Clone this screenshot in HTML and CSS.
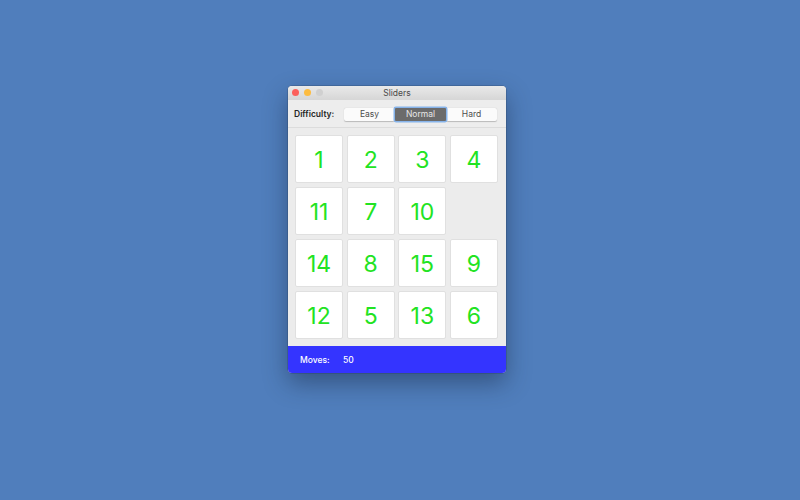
FILE: index.html
```html
<!DOCTYPE html>
<html>
<head>
<meta charset="utf-8">
<link rel="stylesheet" href="styles.css">
</head>
<body>
<div class="window">
  <div class="titlebar">
    <div class="lights">
      <span class="light red"></span>
      <span class="light yellow"></span>
      <span class="light grey"></span>
    </div>
    <div class="title">Sliders</div>
  </div>
  <div class="toolbar">
    <span class="label">Difficulty:</span>
    <div class="segmented">
      <span class="seg">Easy</span>
      <span class="seg selected">Normal</span>
      <span class="seg">Hard</span>
    </div>
  </div>
  <div class="board">
    <div class="tile">1</div>
    <div class="tile">2</div>
    <div class="tile">3</div>
    <div class="tile">4</div>
    <div class="tile">11</div>
    <div class="tile">7</div>
    <div class="tile">10</div>
    <div class="empty"></div>
    <div class="tile">14</div>
    <div class="tile">8</div>
    <div class="tile">15</div>
    <div class="tile">9</div>
    <div class="tile">12</div>
    <div class="tile">5</div>
    <div class="tile">13</div>
    <div class="tile">6</div>
  </div>
  <div class="footer">
    <span class="moves-label">Moves:</span>
    <span class="moves-value">50</span>
  </div>
</div>
</body>
</html>
```

FILE: styles.css
```css
html, body {
  margin: 0;
  padding: 0;
}
body {
  width: 800px;
  height: 500px;
  background: #507ebc;
  font-family: Inter, "Liberation Sans", sans-serif;
  position: relative;
  overflow: hidden;
}
.window {
  position: absolute;
  left: 288px;
  top: 86px;
  width: 218px;
  height: 287px;
  border-radius: 4px;
  overflow: hidden;
  background: #ececec;
  box-shadow: 0 10px 24px rgba(20, 35, 60, 0.45), 0 0 0 0.5px rgba(0, 0, 0, 0.25);
  display: flex;
  flex-direction: column;
}
.titlebar {
  height: 14px;
  flex: none;
  position: relative;
  background: linear-gradient(#e9e9e9, #d6d6d6);
  display: flex;
  align-items: center;
  justify-content: center;
}
.lights {
  position: absolute;
  left: 4px;
  top: 3px;
  display: flex;
  gap: 5px;
}
.light {
  width: 7px;
  height: 7px;
  border-radius: 50%;
  display: block;
}
.red { background: #fc605b; }
.yellow { background: #fdbc40; }
.grey { background: #d0d0d0; }
.title {
  font-size: 8.5px;
  color: #4a4a4a;
}
.toolbar {
  height: 28px;
  flex: none;
  display: flex;
  align-items: center;
  padding-left: 6px;
  border-bottom: 1px solid #dcdcdc;
  box-sizing: border-box;
  background: #ededed;
}
.label {
  font-size: 8.5px;
  font-weight: 600;
  color: #262626;
  width: 50px;
}
.segmented {
  display: flex;
  margin-top: 1px;
}
.seg {
  width: 51px;
  height: 13px;
  background: #fbfbfb;
  box-shadow: 0 0.5px 1px rgba(0, 0, 0, 0.22);
  font-size: 8.5px;
  color: #4d4d4d;
  display: flex;
  align-items: center;
  justify-content: center;
  border-radius: 2px;
}
.seg.selected {
  background: #6b6b6b;
  color: #e8e8e8;
  border-radius: 1px;
  box-shadow: 0 0 0 1.5px #86b3ea;
  position: relative;
  z-index: 1;
}
.board {
  flex: none;
  margin: 7px 8px 0 7px;
  display: grid;
  grid-template-columns: repeat(4, 1fr);
  grid-auto-rows: 48.4px;
  gap: 3.6px;
  height: 204.4px;
}
.tile {
  background: #ffffff;
  border: 1px solid #e0e0e0;
  border-radius: 2px;
  box-sizing: border-box;
  display: flex;
  align-items: center;
  justify-content: center;
  color: #22e322;
  font-size: 23px;
  font-weight: 400;
  padding-top: 1px;
}
.footer {
  margin-top: auto;
  height: 27px;
  flex: none;
  background: #3434ff;
  display: flex;
  align-items: center;
  padding-left: 12px;
  color: #ffffff;
  font-size: 8.5px;
  font-weight: 500;
}
.moves-label {
  width: 43px;
}
```
